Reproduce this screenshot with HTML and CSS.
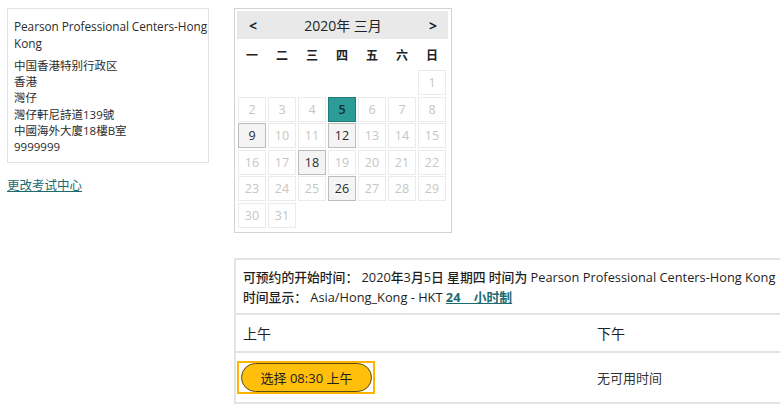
FILE: index.html
```html
<!DOCTYPE html>
<html lang="zh">
<head>
<meta charset="utf-8">
<link rel="stylesheet" href="styles.css">
</head>
<body>
<div class="page">
  <div class="left">
    <div class="addr-box">
      <div class="center-name">Pearson Professional Centers-Hong Kong</div>
      <div class="addr">
        <div>中国香港特别行政区</div>
        <div>香港</div>
        <div>灣仔</div>
        <div>灣仔軒尼詩道139號</div>
        <div>中國海外大廈18樓B室</div>
        <div>9999999</div>
      </div>
    </div>
    <a class="change-link" href="#">更改考试中心</a>
  </div>
  <div class="right">
    <div class="calendar">
      <div class="cal-head">
        <span class="arrow">&lt;</span>
        <span class="cal-title">2020年 三月</span>
        <span class="arrow">&gt;</span>
      </div>
      <div class="weekdays">
        <span>一</span><span>二</span><span>三</span><span>四</span><span>五</span><span>六</span><span>日</span>
      </div>
      <div class="days">
        <span class="empty"></span><span class="empty"></span><span class="empty"></span><span class="empty"></span><span class="empty"></span><span class="empty"></span>
        <span class="day">1</span>
        <span class="day">2</span><span class="day">3</span><span class="day">4</span><span class="day selected">5</span><span class="day">6</span><span class="day">7</span><span class="day">8</span>
        <span class="day avail">9</span><span class="day">10</span><span class="day">11</span><span class="day avail">12</span><span class="day">13</span><span class="day">14</span><span class="day">15</span>
        <span class="day">16</span><span class="day">17</span><span class="day avail">18</span><span class="day">19</span><span class="day">20</span><span class="day">21</span><span class="day">22</span>
        <span class="day">23</span><span class="day">24</span><span class="day">25</span><span class="day avail">26</span><span class="day">27</span><span class="day">28</span><span class="day">29</span>
        <span class="day">30</span><span class="day">31</span>
      </div>
    </div>
    <div class="times">
      <div class="info">
        <div>可预约的开始时间： 2020年3月5日 星期四 时间为 Pearson Professional Centers-Hong Kong</div>
        <div>时间显示： Asia/Hong_Kong - HKT <a class="fmt-link" href="#">24&nbsp;&nbsp;&nbsp;&nbsp;小时制</a></div>
      </div>
      <div class="row head-row">
        <div class="col am">上午</div>
        <div class="col pm">下午</div>
      </div>
      <div class="row body-row">
        <div class="col am">
          <span class="focus-ring"><button class="select-btn">选择 08:30 上午</button></span>
        </div>
        <div class="col pm">无可用时间</div>
      </div>
    </div>
  </div>
</div>
</body>
</html>
```

FILE: styles.css
```css
html, body {
  margin: 0;
  overflow: hidden;
  background: #fff;
}
body {
  font-family: "Open Sans", "Noto Sans CJK SC", sans-serif;
  color: #2b2b2b;
  font-size: 12px;
}
.page {
  display: flex;
  padding: 8px 0 0 7px;
  gap: 25px;
  width: 1200px;
}
.left {
  width: 202px;
  flex: none;
}
.addr-box {
  border: 1px solid #e2e2e2;
  padding: 9px 0 7px 6px;
  height: 155px;
  box-sizing: border-box;
}
.center-name {
  font-size: 11.8px;
  line-height: 17px;
  letter-spacing: -0.05px;
}
.addr {
  margin-top: 6px;
  font-size: 11.5px;
  line-height: 16.2px;
}
.change-link {
  display: inline-block;
  margin-top: 15px;
  font-size: 12.5px;
  line-height: 16px;
  color: #1d6b70;
  text-decoration: underline;
}
.right {
  flex: none;
  width: 620px;
}
.calendar {
  width: 218px;
  height: 225px;
  box-sizing: border-box;
  border: 1px solid #d2d2d2;
  padding: 2px 3px 0 2px;
}
.cal-head {
  height: 28px;
  background: #e9e9e9;
  display: flex;
  align-items: center;
  justify-content: space-between;
  padding: 0 11px 0 12px;
}
.arrow {
  font-weight: 700;
  font-size: 14px;
  color: #222;
}
.cal-title {
  font-size: 14px;
  color: #222;
}
.weekdays {
  display: grid;
  grid-template-columns: repeat(7, 28px);
  column-gap: 2px;
  padding-left: 1px;
  height: 31px;
  align-items: center;
}
.weekdays span {
  text-align: center;
  font-weight: 700;
  font-size: 12px;
  color: #222;
}
.days {
  display: grid;
  grid-template-columns: repeat(7, 28px);
  grid-auto-rows: 25px;
  column-gap: 2px;
  row-gap: 1.5px;
  padding-left: 1px;
}
.day {
  box-sizing: border-box;
  border: 1px solid #ebebeb;
  color: #c6c6c6;
  font-size: 12.5px;
  display: flex;
  align-items: center;
  justify-content: center;
}
.day.avail {
  background: #f4f4f4;
  border-color: #bcbcbc;
  color: #2b2b2b;
}
.day.selected {
  background: #2b9c98;
  border-color: #1f7d79;
  color: #12302f;
  font-weight: 600;
}
.times {
  margin-top: 25px;
  border: 2px solid #e4e4e4;
  border-right: none;
  width: 620px;
  box-sizing: border-box;
}
.info {
  padding: 7px 7px 6px;
  font-size: 12.8px;
  line-height: 20px;
  color: #1e1e1e;
  font-weight: 500;
}
.fmt-link {
  color: #1d6b70;
  font-weight: 700;
  text-decoration: underline;
}
.row {
  display: flex;
  border-top: 2px solid #e4e4e4;
}
.col.am {
  width: 361px;
  padding-left: 7px;
  box-sizing: border-box;
}
.col.pm {
  flex: 1;
}
.head-row {
  height: 36px;
  align-items: center;
  font-size: 14px;
  color: #222;
}
.body-row {
  height: 49px;
  align-items: center;
  font-size: 13px;
}
.body-row .col.am {
  padding-left: 1px;
}
.focus-ring {
  display: inline-block;
  border: 2px solid #ffb400;
  padding: 0 1px 0 2px;
  background: #fff;
}
.select-btn {
  display: block;
  width: 131px;
  height: 29px;
  border: 1px solid #5c4a14;
  border-radius: 15px;
  background: #ffbf0a;
  font-family: "Open Sans", "Noto Sans CJK SC", sans-serif;
  font-size: 13px;
  color: #222;
  padding: 0;
}
.body-row .col.pm {
  color: #333;
}
```
